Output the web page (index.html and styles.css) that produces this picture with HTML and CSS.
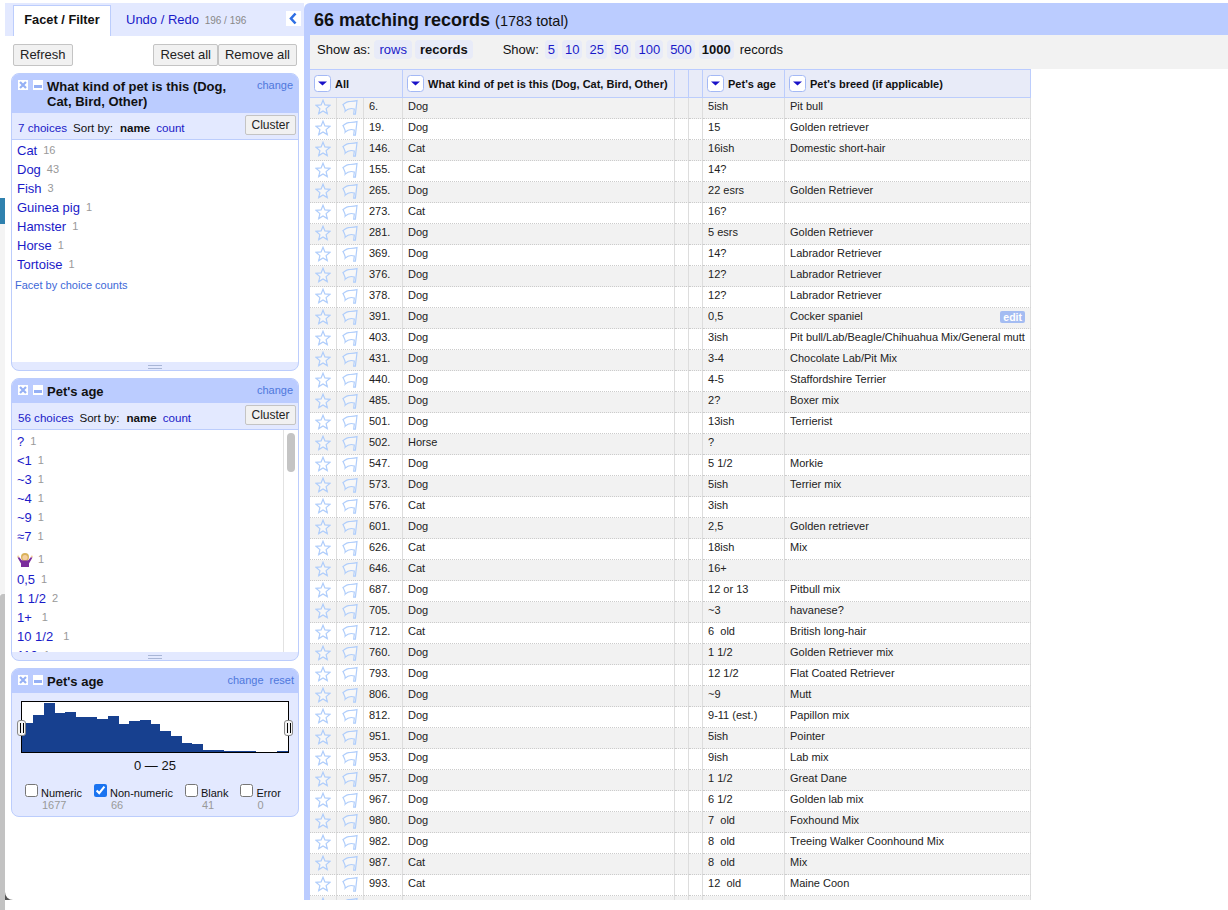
FILE: index.html
```html
<!DOCTYPE html>
<html lang="en">
<head>
<meta charset="utf-8">
<title>OpenRefine facets</title>
<link rel="stylesheet" href="styles.css">
</head>
<body>
<svg class="defs" width="0" height="0" aria-hidden="true">
  <symbol id="star" viewBox="0 0 16 16"><path d="M8 1.200l1.900 4.700 5.100.4-3.900 3.300 1.200 5-4.300-2.700-4.300 2.700 1.200-5L1 6.300l5.100-.4z" fill="#fff" fill-opacity=".4" stroke="#afcdfb" stroke-width="1.200"/></symbol>
  <symbol id="flag" viewBox="0 0 16 16"><path d="M1 5.500C3 4.500 4 2.800 6.500 2.600 9 2.400 12 2.400 15 1.600l-1.600 13.600h-1.700l.6-5.200C9 9 5.500 9.800 3.200 12.200 3.600 10 2 7.500 1 5.500z" fill="#fff" fill-opacity=".4" stroke="#afcdfb" stroke-width="1.200"/></symbol>
  <symbol id="close" viewBox="0 0 10 10"><rect width="10" height="10" fill="#fff"/><path d="M2 2l6 6M8 2L2 8" stroke="#95b0f5" stroke-width="2.200"/></symbol>
  <symbol id="minus" viewBox="0 0 10 10"><rect width="10" height="10" fill="#fff"/><rect x="1" y="5" width="8" height="3" fill="#95b0f5"/></symbol>
  <symbol id="drop" viewBox="0 0 17 17"><rect x=".5" y=".5" width="16" height="16" rx="3" fill="#fff" stroke="#a4b9f5"/><path d="M4 6.500h9l-4.500 4z" fill="#1a12c8"/></symbol>
</svg>

<div class="edge">
  <div class="edge-top"></div>
  <div class="edge-blue"></div>
  <div class="edge-light"></div>
  <div class="edge-gray"></div>
</div>

<div class="main">
  <div class="left">
    <div class="left-inner">
      <div class="tabs">
        <div class="tab-active">Facet / Filter</div>
        <div class="tab-undo"><span class="link">Undo / Redo</span> <span class="tab-count">196 / 196</span></div>
        <div class="collapse"><svg width="15" height="15" viewBox="0 0 15 15"><path d="M9.500 2.500L5 7.500l4.500 5" fill="none" stroke="#2f6fe4" stroke-width="2.600"/></svg></div>
      </div>
      <div class="actions">
        <button class="btn">Refresh</button>
        <div class="btn-group"><button class="btn">Reset all</button><button class="btn">Remove all</button></div>
      </div>

      <section class="facet facet-pet">
        <div class="facet-head">
          <svg class="ico"><use href="#close"/></svg>
          <svg class="ico"><use href="#minus"/></svg>
          <div class="facet-title">What kind of pet is this (Dog, Cat, Bird, Other)</div>
          <span class="head-link">change</span>
        </div>
        <div class="facet-controls">
          <span class="link">7 choices</span><span class="sort">Sort by:</span><b class="sort-on">name</b><span class="link">count</span>
          <button class="cluster">Cluster</button>
        </div>
        <div class="facet-body body-pet">
          <div class="choice"><span class="link">Cat</span><span class="n">16</span></div>
          <div class="choice"><span class="link">Dog</span><span class="n">43</span></div>
          <div class="choice"><span class="link">Fish</span><span class="n">3</span></div>
          <div class="choice"><span class="link">Guinea pig</span><span class="n">1</span></div>
          <div class="choice"><span class="link">Hamster</span><span class="n">1</span></div>
          <div class="choice"><span class="link">Horse</span><span class="n">1</span></div>
          <div class="choice"><span class="link">Tortoise</span><span class="n">1</span></div>
          <div class="by-count">Facet by choice counts</div>
        </div>
        <div class="grip"><i></i></div>
      </section>

      <section class="facet facet-age">
        <div class="facet-head head-single">
          <svg class="ico"><use href="#close"/></svg>
          <svg class="ico"><use href="#minus"/></svg>
          <div class="facet-title">Pet's age</div>
          <span class="head-link">change</span>
        </div>
        <div class="facet-controls">
          <span class="link">56 choices</span><span class="sort">Sort by:</span><b class="sort-on">name</b><span class="link">count</span>
          <button class="cluster">Cluster</button>
        </div>
        <div class="facet-body body-age">
          <div class="scroll"><div class="thumb"></div></div>
          <div class="choice"><span class="link">?</span><span class="n">1</span></div>
          <div class="choice"><span class="link">&lt;1</span><span class="n">1</span></div>
          <div class="choice"><span class="link">~3</span><span class="n">1</span></div>
          <div class="choice"><span class="link">~4</span><span class="n">1</span></div>
          <div class="choice"><span class="link">~9</span><span class="n">1</span></div>
          <div class="choice"><span class="link">≈7</span><span class="n">1</span></div>
          <div class="choice choice-emoji">
            <svg class="shrug" width="16" height="16" viewBox="0 0 16 16"><path d="M.5 5.500L2 5l3 3.500h6L14 5l1.500.5L12 11.500V15H4v-3.500z" fill="#7b2d9c"/><circle cx="8" cy="5" r="4" fill="#d9b25a"/><path d="M4.500 8.500h7L12 11H4z" fill="#7b2d9c"/><circle cx="8" cy="5.500" r="2.600" fill="#f5cfa0"/><circle cx="1.200" cy="4.500" r="1" fill="#f5cfa0"/><circle cx="14.800" cy="4.500" r="1" fill="#f5cfa0"/></svg><span class="n">1</span>
          </div>
          <div class="choice"><span class="link">0,5</span><span class="n">1</span></div>
          <div class="choice"><span class="link">1 1/2</span><span class="n">2</span></div>
          <div class="choice"><span class="link">1+</span><span class="n n-wide">1</span></div>
          <div class="choice"><span class="link">10 1/2</span><span class="n n-wide">1</span></div>
          <div class="choice"><span class="link">110</span><span class="n">1</span></div>
        </div>
        <div class="grip"><i></i></div>
      </section>

      <section class="facet facet-range">
        <div class="facet-head head-single">
          <svg class="ico"><use href="#close"/></svg>
          <svg class="ico"><use href="#minus"/></svg>
          <div class="facet-title">Pet's age</div>
          <span class="head-link">change</span><span class="head-link head-reset">reset</span>
        </div>
        <div class="range-body">
          <div class="hist">
            <svg class="hist-svg" width="266" height="50" viewBox="0 0 267 50" shape-rendering="crispEdges">
              <g fill="#17408f">
                <rect x="0" y="21" width="11" height="29"/><rect x="11" y="13" width="11" height="37"/><rect x="22" y="1" width="11" height="49"/><rect x="33" y="11" width="10" height="39"/><rect x="43" y="10" width="11" height="40"/><rect x="54" y="15" width="21" height="35"/><rect x="75" y="17" width="11" height="33"/><rect x="86" y="14" width="11" height="36"/><rect x="97" y="22" width="10" height="28"/><rect x="107" y="19" width="11" height="31"/><rect x="118" y="18" width="11" height="32"/><rect x="129" y="22" width="10" height="28"/><rect x="139" y="29" width="11" height="21"/><rect x="150" y="34" width="11" height="16"/><rect x="161" y="41" width="10" height="9"/><rect x="171" y="42" width="11" height="8"/><rect x="182" y="48" width="21" height="2"/><rect x="203" y="49" width="32" height="1"/><rect x="256" y="49" width="11" height="1"/>
              </g>
            </svg>
            <div class="handle handle-l"><i></i></div>
            <div class="handle handle-r"><i></i></div>
          </div>
          <div class="range-label">0 — 25</div>
          <div class="modes">
            <label class="mode"><input type="checkbox"><span class="mode-text">Numeric<small>1677</small></span></label>
            <label class="mode"><input type="checkbox" checked><span class="mode-text">Non-numeric<small>66</small></span></label>
            <label class="mode"><input type="checkbox"><span class="mode-text">Blank<small>41</small></span></label>
            <label class="mode"><input type="checkbox"><span class="mode-text">Error<small>0</small></span></label>
          </div>
        </div>
      </section>
    </div>
  </div>

  <div class="right">
    <div class="summary"><b>66 matching records</b> <span class="total">(1783 total)</span></div>
    <div class="view">
      <div class="viewbar">
        <span class="show-as">Show as:</span>
        <span class="pill pill-wide link">rows</span>
        <span class="pill pill-wide on">records</span>
        <span class="show-n">Show:</span>
        <span class="pill link">5</span>
        <span class="pill link">10</span>
        <span class="pill link">25</span>
        <span class="pill link">50</span>
        <span class="pill link">100</span>
        <span class="pill link">500</span>
        <span class="pill on">1000</span>
        <span class="rec">records</span>
      </div>
      <table class="grid">
        <colgroup><col class="c1"><col class="c2"><col class="c3"><col class="c4"><col class="c5"><col class="c6"><col class="c7"><col class="c8"></colgroup>
        <thead>
          <tr>
            <th colspan="3"><span class="th"><svg class="drop"><use href="#drop"/></svg>All</span></th>
            <th><span class="th"><svg class="drop"><use href="#drop"/></svg>What kind of pet is this (Dog, Cat, Bird, Other)</span></th>
            <th></th><th></th>
            <th><span class="th"><svg class="drop"><use href="#drop"/></svg>Pet's age</span></th>
            <th><span class="th"><svg class="drop"><use href="#drop"/></svg>Pet's breed (if applicable)</span></th>
          </tr>
        </thead>
        <tbody>
<tr><td class="i"><svg class="s"><use href="#star"/></svg></td><td class="i"><svg class="s"><use href="#flag"/></svg></td><td>6.</td><td>Dog</td><td></td><td></td><td>5ish</td><td>Pit bull</td></tr>
<tr><td class="i"><svg class="s"><use href="#star"/></svg></td><td class="i"><svg class="s"><use href="#flag"/></svg></td><td>19.</td><td>Dog</td><td></td><td></td><td>15</td><td>Golden retriever</td></tr>
<tr><td class="i"><svg class="s"><use href="#star"/></svg></td><td class="i"><svg class="s"><use href="#flag"/></svg></td><td>146.</td><td>Cat</td><td></td><td></td><td>16ish</td><td>Domestic short-hair</td></tr>
<tr><td class="i"><svg class="s"><use href="#star"/></svg></td><td class="i"><svg class="s"><use href="#flag"/></svg></td><td>155.</td><td>Cat</td><td></td><td></td><td>14?</td><td></td></tr>
<tr><td class="i"><svg class="s"><use href="#star"/></svg></td><td class="i"><svg class="s"><use href="#flag"/></svg></td><td>265.</td><td>Dog</td><td></td><td></td><td>22 esrs</td><td>Golden Retriever</td></tr>
<tr><td class="i"><svg class="s"><use href="#star"/></svg></td><td class="i"><svg class="s"><use href="#flag"/></svg></td><td>273.</td><td>Cat</td><td></td><td></td><td>16?</td><td></td></tr>
<tr><td class="i"><svg class="s"><use href="#star"/></svg></td><td class="i"><svg class="s"><use href="#flag"/></svg></td><td>281.</td><td>Dog</td><td></td><td></td><td>5 esrs</td><td>Golden Retriever</td></tr>
<tr><td class="i"><svg class="s"><use href="#star"/></svg></td><td class="i"><svg class="s"><use href="#flag"/></svg></td><td>369.</td><td>Dog</td><td></td><td></td><td>14?</td><td>Labrador Retriever</td></tr>
<tr><td class="i"><svg class="s"><use href="#star"/></svg></td><td class="i"><svg class="s"><use href="#flag"/></svg></td><td>376.</td><td>Dog</td><td></td><td></td><td>12?</td><td>Labrador Retriever</td></tr>
<tr><td class="i"><svg class="s"><use href="#star"/></svg></td><td class="i"><svg class="s"><use href="#flag"/></svg></td><td>378.</td><td>Dog</td><td></td><td></td><td>12?</td><td>Labrador Retriever</td></tr>
<tr><td class="i"><svg class="s"><use href="#star"/></svg></td><td class="i"><svg class="s"><use href="#flag"/></svg></td><td>391.</td><td>Dog</td><td></td><td></td><td>0,5</td><td class="has-edit">Cocker spaniel<span class="edit">edit</span></td></tr>
<tr><td class="i"><svg class="s"><use href="#star"/></svg></td><td class="i"><svg class="s"><use href="#flag"/></svg></td><td>403.</td><td>Dog</td><td></td><td></td><td>3ish</td><td>Pit bull/Lab/Beagle/Chihuahua Mix/General mutt</td></tr>
<tr><td class="i"><svg class="s"><use href="#star"/></svg></td><td class="i"><svg class="s"><use href="#flag"/></svg></td><td>431.</td><td>Dog</td><td></td><td></td><td>3-4</td><td>Chocolate Lab/Pit Mix</td></tr>
<tr><td class="i"><svg class="s"><use href="#star"/></svg></td><td class="i"><svg class="s"><use href="#flag"/></svg></td><td>440.</td><td>Dog</td><td></td><td></td><td>4-5</td><td>Staffordshire Terrier</td></tr>
<tr><td class="i"><svg class="s"><use href="#star"/></svg></td><td class="i"><svg class="s"><use href="#flag"/></svg></td><td>485.</td><td>Dog</td><td></td><td></td><td>2?</td><td>Boxer mix</td></tr>
<tr><td class="i"><svg class="s"><use href="#star"/></svg></td><td class="i"><svg class="s"><use href="#flag"/></svg></td><td>501.</td><td>Dog</td><td></td><td></td><td>13ish</td><td>Terrierist</td></tr>
<tr><td class="i"><svg class="s"><use href="#star"/></svg></td><td class="i"><svg class="s"><use href="#flag"/></svg></td><td>502.</td><td>Horse</td><td></td><td></td><td>?</td><td></td></tr>
<tr><td class="i"><svg class="s"><use href="#star"/></svg></td><td class="i"><svg class="s"><use href="#flag"/></svg></td><td>547.</td><td>Dog</td><td></td><td></td><td>5 1/2</td><td>Morkie</td></tr>
<tr><td class="i"><svg class="s"><use href="#star"/></svg></td><td class="i"><svg class="s"><use href="#flag"/></svg></td><td>573.</td><td>Dog</td><td></td><td></td><td>5ish</td><td>Terrier mix</td></tr>
<tr><td class="i"><svg class="s"><use href="#star"/></svg></td><td class="i"><svg class="s"><use href="#flag"/></svg></td><td>576.</td><td>Cat</td><td></td><td></td><td>3ish</td><td></td></tr>
<tr><td class="i"><svg class="s"><use href="#star"/></svg></td><td class="i"><svg class="s"><use href="#flag"/></svg></td><td>601.</td><td>Dog</td><td></td><td></td><td>2,5</td><td>Golden retriever</td></tr>
<tr><td class="i"><svg class="s"><use href="#star"/></svg></td><td class="i"><svg class="s"><use href="#flag"/></svg></td><td>626.</td><td>Cat</td><td></td><td></td><td>18ish</td><td>Mix</td></tr>
<tr><td class="i"><svg class="s"><use href="#star"/></svg></td><td class="i"><svg class="s"><use href="#flag"/></svg></td><td>646.</td><td>Cat</td><td></td><td></td><td>16+</td><td></td></tr>
<tr><td class="i"><svg class="s"><use href="#star"/></svg></td><td class="i"><svg class="s"><use href="#flag"/></svg></td><td>687.</td><td>Dog</td><td></td><td></td><td>12 or 13</td><td>Pitbull mix</td></tr>
<tr><td class="i"><svg class="s"><use href="#star"/></svg></td><td class="i"><svg class="s"><use href="#flag"/></svg></td><td>705.</td><td>Dog</td><td></td><td></td><td>~3</td><td>havanese?</td></tr>
<tr><td class="i"><svg class="s"><use href="#star"/></svg></td><td class="i"><svg class="s"><use href="#flag"/></svg></td><td>712.</td><td>Cat</td><td></td><td></td><td>6&nbsp; old</td><td>British long-hair</td></tr>
<tr><td class="i"><svg class="s"><use href="#star"/></svg></td><td class="i"><svg class="s"><use href="#flag"/></svg></td><td>760.</td><td>Dog</td><td></td><td></td><td>1 1/2</td><td>Golden Retriever mix</td></tr>
<tr><td class="i"><svg class="s"><use href="#star"/></svg></td><td class="i"><svg class="s"><use href="#flag"/></svg></td><td>793.</td><td>Dog</td><td></td><td></td><td>12 1/2</td><td>Flat Coated Retriever</td></tr>
<tr><td class="i"><svg class="s"><use href="#star"/></svg></td><td class="i"><svg class="s"><use href="#flag"/></svg></td><td>806.</td><td>Dog</td><td></td><td></td><td>~9</td><td>Mutt</td></tr>
<tr><td class="i"><svg class="s"><use href="#star"/></svg></td><td class="i"><svg class="s"><use href="#flag"/></svg></td><td>812.</td><td>Dog</td><td></td><td></td><td>9-11 (est.)</td><td>Papillon mix</td></tr>
<tr><td class="i"><svg class="s"><use href="#star"/></svg></td><td class="i"><svg class="s"><use href="#flag"/></svg></td><td>951.</td><td>Dog</td><td></td><td></td><td>5ish</td><td>Pointer</td></tr>
<tr><td class="i"><svg class="s"><use href="#star"/></svg></td><td class="i"><svg class="s"><use href="#flag"/></svg></td><td>953.</td><td>Dog</td><td></td><td></td><td>9ish</td><td>Lab mix</td></tr>
<tr><td class="i"><svg class="s"><use href="#star"/></svg></td><td class="i"><svg class="s"><use href="#flag"/></svg></td><td>957.</td><td>Dog</td><td></td><td></td><td>1 1/2</td><td>Great Dane</td></tr>
<tr><td class="i"><svg class="s"><use href="#star"/></svg></td><td class="i"><svg class="s"><use href="#flag"/></svg></td><td>967.</td><td>Dog</td><td></td><td></td><td>6 1/2</td><td>Golden lab mix</td></tr>
<tr><td class="i"><svg class="s"><use href="#star"/></svg></td><td class="i"><svg class="s"><use href="#flag"/></svg></td><td>980.</td><td>Dog</td><td></td><td></td><td>7&nbsp; old</td><td>Foxhound Mix</td></tr>
<tr><td class="i"><svg class="s"><use href="#star"/></svg></td><td class="i"><svg class="s"><use href="#flag"/></svg></td><td>982.</td><td>Dog</td><td></td><td></td><td>8&nbsp; old</td><td>Treeing Walker Coonhound Mix</td></tr>
<tr><td class="i"><svg class="s"><use href="#star"/></svg></td><td class="i"><svg class="s"><use href="#flag"/></svg></td><td>987.</td><td>Cat</td><td></td><td></td><td>8&nbsp; old</td><td>Mix</td></tr>
<tr><td class="i"><svg class="s"><use href="#star"/></svg></td><td class="i"><svg class="s"><use href="#flag"/></svg></td><td>993.</td><td>Cat</td><td></td><td></td><td>12&nbsp; old</td><td>Maine Coon</td></tr>
<tr><td class="i"><svg class="s"><use href="#star"/></svg></td><td class="i"><svg class="s"><use href="#flag"/></svg></td><td>1006.</td><td>Dog</td><td></td><td></td><td>33 10333</td><td>mutt</td></tr>
        </tbody>
      </table>
    </div>
  </div>
</div>
</body>
</html>
```
FILE: styles.css
```css
* { box-sizing: border-box; }
html, body { margin: 0; height: 910px; overflow: hidden; background: #fff; }
body { display: flex; font-family: "Liberation Sans", Arial, sans-serif; font-size: 13px; color: #111; }
.defs { position: absolute; }
.link { color: #1a1ac8; }

.edge { width: 5px; height: 910px; display: flex; flex-direction: column; flex: none; }
.edge-top { height: 198px; background: #fff; }
.edge-blue { height: 26px; background: #2f81ae; }
.edge-light { height: 370px; background: #f4f4f4; }
.edge-gray { flex: 1; background: #c2c2c2; border-top-left-radius: 3px; }

.main { margin-top: 3px; height: 897px; flex: 1; display: flex; overflow: hidden; }
.left { width: 299px; flex: none; background: #555; }
.left-inner { height: 100%; background: #fff; border-bottom-left-radius: 8px; overflow: hidden; }

.tabs { height: 33px; background: #e3e9ff; display: flex; padding: 2px 3px 0 8px; align-items: flex-start; }
.tab-active { width: 98px; height: 31px; background: #fff; border: 1px solid #bccdfc; border-bottom: 0; font-weight: bold; font-size: 12.800px; line-height: 28px; text-align: center; }
.tab-undo { margin-left: 15px; line-height: 30px; }
.tab-count { font-size: 10px; color: #888; margin-left: 2px; }
.collapse { margin-left: auto; margin-top: 6px; width: 15px; height: 15px; background: #fff; }
.collapse svg { display: block; }

.actions { display: flex; justify-content: space-between; padding: 8px 7px 0 8px; height: 37px; }
.btn { height: 22px; padding: 0 6px 2px; font: 13px "Liberation Sans", Arial, sans-serif; color: #222; background: #f1f1f1; border: 1px solid #c4c4c4; border-radius: 2px; }
.btn-group { display: flex; }

.facet { margin: 0 5px 0 6px; width: 288px; border-radius: 8px; background: #e3e9ff; border: 1px solid #bccdfc; overflow: hidden; }
.facet-pet { height: 298px; margin-bottom: 7px; }
.facet-age { height: 283px; margin-bottom: 7px; }
.facet-range { height: 149px; }
.facet-head { height: 40px; margin: -1px -1px 0; background: #bbccff; display: flex; padding: 7px 6px 0 7px; position: relative; }
.head-single { height: 25px; }
.ico { width: 10px; height: 10px; flex: none; margin-right: 5px; }
.facet-title { font-weight: bold; font-size: 13px; line-height: 15px; width: 190px; color: #111; margin: -1px 0 0 -1px; }
.head-single .facet-title { width: auto; flex: 1; }
.head-link { font-size: 11px; color: #4f78dc; margin-left: auto; margin-top: -1px; }
.facet-range .facet-head { padding-right: 5px; }
.facet-range .facet-title { flex: 1; }
.facet-range .head-link { margin-left: 0; }
.facet-range .head-reset { margin-left: 6px; }

.facet-controls { height: 27px; display: flex; align-items: center; padding: 2px 2px 0 6px; font-size: 11.600px; position: relative; border-bottom: 1px solid #bccdfc; }
.sort { margin-left: 6px; }
.sort-on { margin: 0 6px 0 7px; }
.cluster { margin-left: auto; margin-top: -5px; width: 51px; height: 20px; padding: 0; font: 12px "Liberation Sans", Arial, sans-serif; color: #222; background: #f1f1f1; border: 1px solid #c4c4c4; border-radius: 2px; }

.facet-body { background: #fff; overflow: hidden; padding: 2px 0 0 5px; position: relative; }
.body-pet { height: 222px; padding-top: 1px; }
.body-age { height: 222px; }
.choice { height: 19px; line-height: 19px; display: flex; white-space: nowrap; flex: none; }
.n { font-size: 11px; color: #999; margin-left: 6px; }
.n-wide { margin-left: 10px; }
.choice-emoji { height: 24px; align-items: center; padding-top: 3px; }
.choice-emoji .n { margin-left: 5px; }
.by-count { font-size: 11px; color: #3d68d8; margin: 5px 0 0 -2px; }
.scroll { position: absolute; top: 0; right: 0; bottom: 0; width: 15px; border-left: 1px solid #e2e2e2; }
.thumb { width: 8px; height: 39px; margin: 3px 0 0 3px; background: #c4c4c4; border-radius: 4px; }
.grip { height: 9px; display: flex; align-items: center; justify-content: center; }
.grip i { width: 14px; height: 4px; border-top: 1px solid #a9b6d6; border-bottom: 1px solid #a9b6d6; }

.range-body { padding: 8px 0 0; }
.hist { margin-left: 9px; width: 268px; height: 52px; border: 1px solid #000; background: #fff; position: relative; }
.hist-svg { display: block; }
.handle { position: absolute; top: 18px; width: 9px; height: 16px; background: #f4f4f4; border: 1px solid #888; border-radius: 3px; display: flex; justify-content: center; }
.handle i { width: 4px; margin: 2px 0; border-left: 1px solid #000; border-right: 1px solid #000; }
.handle-l { left: -5px; }
.handle-r { right: -5px; }
.range-label { text-align: center; line-height: 16px; margin-top: 5px; }
.modes { display: flex; gap: 12px; padding: 10px 0 0 13px; font-size: 11px; }
.mode { display: flex; align-items: flex-start; }
.mode input { width: 13px; height: 13px; margin: 0 3px 0 0; accent-color: #1a73f0; }
.mode-text { line-height: 12px; padding-top: 3px; white-space: nowrap; }
.mode-text small { display: block; font-size: 11px; color: #999; margin-left: 1px; }

.right { flex: 1; min-width: 0; background: #bbccff; border-top-left-radius: 6px; overflow: hidden; display: flex; flex-direction: column; }
.summary { height: 32px; flex: none; padding: 7px 0 0 10px; line-height: 21px; font-size: 14.500px; white-space: nowrap; }
.summary b { font-size: 18px; }
.total { margin-left: 1px; }
.view { margin-left: 6px; flex: 1; background: #fff; overflow: hidden; }
.viewbar { height: 34px; background: #f2f2f2; display: flex; align-items: center; padding: 0 0 5px 7px; white-space: nowrap; font-size: 13px; }
.pill { background: #e8ebf8; border-radius: 4px; padding: 0 3px; line-height: 19px; margin-right: 4px; }
.pill-wide { padding: 0 5px; margin-right: 3px; }
.pill.on { font-weight: bold; color: #111; }
.show-as { margin-right: 4px; }
.show-n { margin-left: 27px; margin-right: 6px; }
.rec { margin-left: 2px; }

.grid { table-layout: fixed; width: 721px; border-collapse: separate; border-spacing: 0; border-top: 1px solid #bbccff; font-size: 11px; color: #222; }
.c1 { width: 27px; } .c2 { width: 27px; } .c3 { width: 39px; } .c4 { width: 272px; }
.c5 { width: 14px; } .c6 { width: 14px; } .c7 { width: 82px; } .c8 { width: 246px; }
.grid th { height: 28px; background: #e8ebf8; border-right: 1px solid #bccdfc; border-bottom: 1px solid #bccdfc; padding: 0 0 0 4px; text-align: left; font-size: 11px; color: #111; white-space: nowrap; overflow: hidden; }
.th { display: flex; align-items: center; }
.drop { width: 17px; height: 17px; margin-right: 4px; flex: none; }
.grid td { height: 21px; padding: 0 0 4px 5px; border-right: 1px solid #ddd; border-bottom: 1px dotted #ccc; white-space: nowrap; overflow: hidden; }
.grid tbody tr:nth-child(odd) td { background: #f2f2f2; }
.grid td.i { padding: 0 0 2px 5px; }
.s { display: block; width: 16px; height: 16px; }
.has-edit { position: relative; }
.edit { position: absolute; right: 5px; top: 3px; height: 12px; line-height: 12px; padding: 0 3px; background: #a4bcf2; color: #fff; font-weight: bold; font-size: 10.500px; border-radius: 2px; }
```
